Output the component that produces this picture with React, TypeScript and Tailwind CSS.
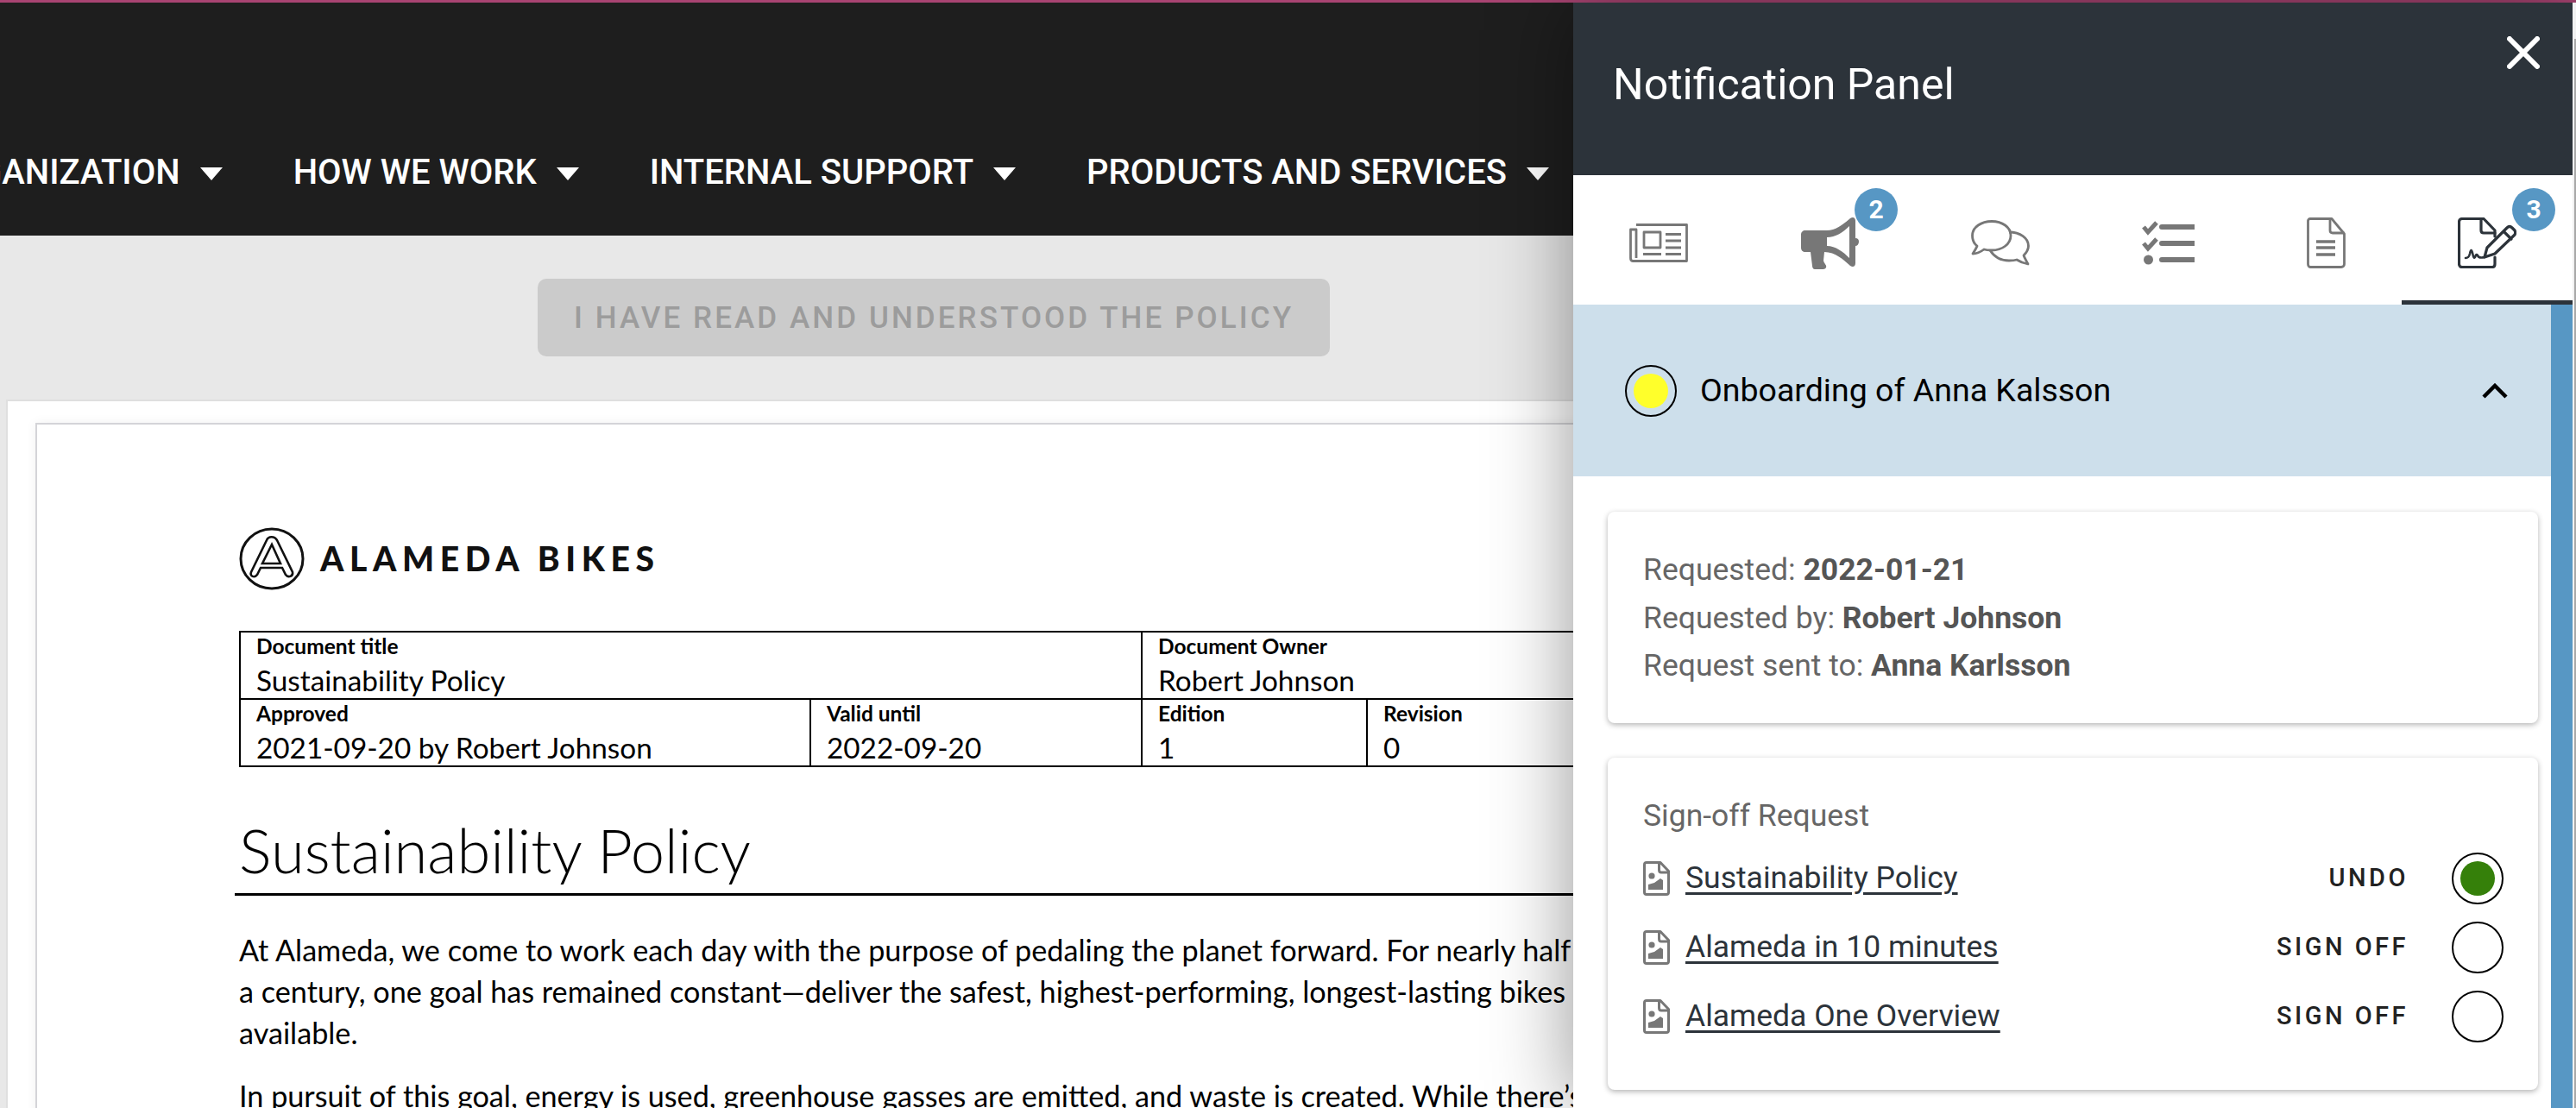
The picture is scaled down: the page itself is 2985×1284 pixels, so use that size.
import React from "react";

const NavItem = ({ label }: { label: string }) => (
  <div className="flex items-center shrink-0 whitespace-nowrap">
    <span className="text-[40px] font-medium text-white">{label}</span>
    <svg className="ml-[23px] mt-[3px]" width="26" height="15" viewBox="0 0 26 15">
      <path d="M0 0H26L13 15Z" fill="#ffffff" />
    </svg>
  </div>
);

const Badge = ({ n }: { n: number }) => (
  <div className="absolute top-[15px] flex h-[50px] w-[50px] items-center justify-center rounded-full bg-[#5797c4] text-[30px] font-bold leading-none text-white">
    {n}
  </div>
);

const Newspaper = () => (
  <svg width="68" height="45" viewBox="0 0 68 45" fill="none" stroke="#777" strokeWidth="2.8" strokeLinejoin="round">
    <path d="M8 1.5H66.5V43.5H4C2 43.5 1.5 42 1.5 40V7H8V40" />
    <rect x="17" y="10" width="19" height="18" />
    <path d="M42 12.5H60M42 20H60M42 28H60M16 35.5H37M42 35.5H60" strokeWidth="3" />
  </svg>
);

const Megaphone = () => (
  <svg width="67" height="60" viewBox="0 0 67 60">
    <path
      fill="#777"
      fillRule="evenodd"
      d="M5 15H30C40 15 49 8 57 1C60 -1 63 0 63 4V24C66 24 67 26 67 28C67 31 65 33 63 33V53C63 57 60 58 57 56C49 49 40 40 27 40L26 50C27 54 30 55 29 58C28 60 26 60 24 60H16C14 60 13 58 13 56L11 40H5C2 40 0 38 0 35V20C0 17 2 15 5 15ZM30 23V33C40 33 49 40 56 47V10C49 17 40 23 30 23Z"
    />
  </svg>
);

const Chat = () => (
  <svg width="68" height="53" viewBox="0 0 68 53" fill="none" stroke="#777" strokeWidth="2.8" strokeLinejoin="round">
    <path d="M24 1.5C36 1.5 46 8 46 18C46 28 36 35 24 35C21 35 18 35 15 34C11 37 6 39 2 39C4 36 6 33 7 30C3 27 1.5 23 1.5 18C1.5 8 12 1.5 24 1.5Z" />
    <path d="M44 14C57 14 66.5 21 66.5 30C66.5 34 64 38 61 41C62 44 64 47 66 51C61 50 56 48 53 46C50 47 46 47 44 47C35 47 27 43 22 35" />
  </svg>
);

const Checklist = () => (
  <svg width="61" height="52" viewBox="0 0 61 52" fill="none" stroke="#777">
    <path d="M2 7L7 13L17 2M2 26L7 32L17 21" strokeWidth="5" />
    <path d="M23 7H60M23 26H60M23 45H60" strokeWidth="6" strokeLinecap="round" />
    <circle cx="7.5" cy="45" r="5.5" fill="#777" stroke="none" />
  </svg>
);

const DocIcon = () => (
  <svg width="45" height="59" viewBox="0 0 45 59" fill="none" stroke="#777" strokeWidth="2.8" strokeLinejoin="round">
    <path d="M4 1.5H29L43.5 19V54C43.5 56 42 57.5 40 57.5H4C2.5 57.5 1.5 56 1.5 54V4C1.5 2.5 2.5 1.5 4 1.5Z" />
    <path d="M27 1.5V15C27 17 28 18 30 18H43.5" />
    <path d="M11 28H33M11 35H33M11 43H33" strokeWidth="3.5" />
  </svg>
);

const SignIcon = () => (
  <svg width="68" height="59" viewBox="0 0 68 59" fill="none" stroke="#2c333a" strokeWidth="3.2" strokeLinejoin="round" strokeLinecap="round">
    <path d="M43 22V15L30 1.5H5C3 1.5 1.5 3 1.5 5V54C1.5 56 3 57.5 5 57.5H40C42 57.5 43 56 43 54V46" />
    <path d="M27 1.5V15C27 17 28 18 30 18H43" />
    <path d="M9 47C12 47 13 46 14 42C15 37 16 37 17 41C18 46 19 48 20 46C21 43 22 42 23 44C24 47 27 47 31 46" strokeWidth="2.6" />
    <path d="M31 46L34 35L57 12C59 10 61 10 63 12L66 15C67 17 67 18 66 20L43 42ZM53 16L62 25" />
  </svg>
);

const FileImage = () => (
  <svg width="31" height="40" viewBox="0 0 31 40" className="shrink-0">
    <path d="M4 1.5H20L29.5 11.5V36C29.5 37.5 28.5 38.5 27 38.5H4C2.5 38.5 1.5 37.5 1.5 36V4C1.5 2.5 2.5 1.5 4 1.5Z" fill="none" stroke="#777" strokeWidth="3" strokeLinejoin="round" />
    <path d="M18.5 2V10C18.5 12 19.5 13 21 13H29" fill="none" stroke="#777" strokeWidth="3" />
    <circle cx="10" cy="17" r="3.6" fill="#777" />
    <path d="M6 33V27L13 25L20 20L23 22V33Z" fill="#777" />
  </svg>
);

const LogoMark = () => (
  <svg width="76" height="73" viewBox="0 0 76 73" fill="none" stroke="#111" className="shrink-0">
    <ellipse cx="38" cy="36.5" rx="36" ry="34.5" strokeWidth="3" />
    <path d="M32 15C34 10 41 10 44 15L62 52C63 57 57 59 54 55L50 47H25L21 55C18 59 12 57 14 52Z" strokeWidth="2.6" />
    <path d="M38 20L48 42H27Z" strokeWidth="2.6" />
  </svg>
);

const Tab = ({ w, children, badgeLeft, n, active }: { w: string; children: React.ReactNode; badgeLeft?: string; n?: number; active?: boolean }) => (
  <div className={`relative flex items-center justify-center pt-[7px] ${w}`}>
    {children}
    {n ? (
      <div className={`absolute ${badgeLeft}`}>
        <Badge n={n} />
      </div>
    ) : null}
    {active ? <div className="absolute bottom-0 left-0 h-[5px] w-full bg-[#2c333a]" /> : null}
  </div>
);

const Cell = ({ label, value, className }: { label: string; value: string; className: string }) => (
  <div className={`h-full shrink-0 pl-[18px] ${className}`}>
    <div className="h-[34px] text-[24.5px] font-bold leading-[32px] text-black">{label}</div>
    <div className="whitespace-nowrap text-[33.3px] leading-[42px] text-black">{value}</div>
  </div>
);

const Row = ({ name, action, done }: { name: string; action: string; done?: boolean }) => (
  <div className="flex h-[80px] items-center">
    <FileImage />
    <span className="ml-[18px] text-[35.5px] text-[#2c333a] underline underline-offset-[5px]">{name}</span>
    <span className="ml-auto text-[29px] font-medium tracking-[0.12em] text-[#222]">{action}</span>
    <div className="ml-[50px] mr-[40px] flex h-[60px] w-[60px] items-center justify-center rounded-full border-[2.5px] border-black bg-white">
      {done ? <div className="h-[40px] w-[40px] rounded-full bg-[#35800a]" /> : null}
    </div>
  </div>
);

export default function App() {
  return (
    <div className="relative h-[1284px] w-[2985px] overflow-hidden bg-[#e8e8e8] font-['Roboto',sans-serif]">
      <div className="h-[3px] bg-[#a94472]" />
      <nav className="flex h-[270px] w-[1823px] items-center justify-end gap-[82px] overflow-hidden bg-[#1e1e1e] pb-[30px] pr-[28px] pt-[154px]">
        <NavItem label="ORGANIZATION" />
        <NavItem label="HOW WE WORK" />
        <NavItem label="INTERNAL SUPPORT" />
        <NavItem label="PRODUCTS AND SERVICES" />
      </nav>

      <div className="ml-[623px] mt-[50px] flex h-[90px] w-[918px] items-center justify-center rounded-[10px] bg-[#cbcbcb] pt-[2px] text-[35px] font-medium tracking-[0.088em] text-[#9c9c9c]">
        I HAVE READ AND UNDERSTOOD THE POLICY
      </div>

      <div className="ml-[7px] mt-[50px] h-[900px] border-l-[2px] border-t-[2px] border-[#dfdfdf] bg-white pl-[32px] pt-[25px]">
        <div className="h-[900px] border-l-[2px] border-t-[2px] border-[#d4d4d8] bg-white pl-[234px] pt-[119px] font-['Lato',sans-serif] shadow-[0_0_12px_rgba(0,0,0,0.06)]">
          <div className="flex h-[73px] items-center">
            <LogoMark />
            <span className="ml-[18px] whitespace-nowrap text-[39px] font-black tracking-[0.17em] text-[#111]">ALAMEDA BIKES</span>
          </div>

          <div className="mt-[47px] w-[2000px] border-[2px] border-black">
            <div className="flex h-[78px] border-b-[2px] border-black">
              <Cell label="Document title" value="Sustainability Policy" className="w-[1045px] border-r-[2px] border-black" />
              <Cell label="Document Owner" value="Robert Johnson" className="w-[600px]" />
            </div>
            <div className="flex h-[76px]">
              <Cell label="Approved" value="2021-09-20 by Robert Johnson" className="w-[661px] border-r-[2px] border-black" />
              <Cell label="Valid until" value="2022-09-20" className="w-[384px] border-r-[2px] border-black" />
              <Cell label="Edition" value="1" className="w-[261px] border-r-[2px] border-black" />
              <Cell label="Revision" value="0" className="w-[400px]" />
            </div>
          </div>

          <div className="-ml-[5px] mt-[36px] h-[113px] w-[2000px] border-b-[3px] border-black pl-[5px] pt-[15px] text-[70.5px] font-light leading-[90px] text-black">
            Sustainability Policy
          </div>

          <p className="mt-[39px] whitespace-nowrap text-[34.2px] leading-[48px] text-black">
            At Alameda, we come to work each day with the purpose of pedaling the planet forward. For nearly half
            <br />
            a century, one goal has remained constant—deliver the safest, highest-performing, longest-lasting bikes
            <br />
            available.
          </p>
          <p className="mt-[25px] whitespace-nowrap text-[34.2px] leading-[48px] text-black">
            In pursuit of this goal, energy is used, greenhouse gasses are emitted, and waste is created. While there’s
          </p>
        </div>
      </div>

      <aside className="absolute bottom-0 left-[1823px] top-[3px] flex w-[1158px] flex-col bg-white shadow-[0_0_90px_rgba(0,0,0,0.42)]">
        <header className="relative flex h-[200px] items-center bg-[#2c333a] pb-[10px] pl-[46px] text-[50px] text-white">
          Notification Panel
          <svg className="absolute left-[1082px] top-[39px]" width="38" height="38" viewBox="0 0 38 38" stroke="#fff" strokeWidth="6" strokeLinecap="round">
            <path d="M3 3L35 35M35 3L3 35" />
          </svg>
        </header>

        <div className="flex h-[150px]">
          <Tab w="w-[198px]"><Newspaper /></Tab>
          <Tab w="w-[198px]" n={2} badgeLeft="left-[128px] top-0"><Megaphone /></Tab>
          <Tab w="w-[198px]"><Chat /></Tab>
          <Tab w="w-[191px]"><Checklist /></Tab>
          <Tab w="w-[175px]"><DocIcon /></Tab>
          <Tab w="w-[198px]" n={3} badgeLeft="left-[128px] top-0" active><SignIcon /></Tab>
        </div>

        <div className="flex min-h-0 flex-1">
          <div className="w-[1133px]">
            <div className="flex h-[199px] items-center bg-[#cddfeb] pl-[60px] pr-[50px]">
              <div className="flex h-[60px] w-[60px] items-center justify-center rounded-full border-[2.5px] border-black">
                <div className="h-[40px] w-[40px] rounded-full bg-[#ffff2b]" />
              </div>
              <span className="ml-[27px] text-[37.5px] text-black">Onboarding of Anna Kalsson</span>
              <svg className="ml-auto" width="30" height="18" viewBox="0 0 30 18" fill="none" stroke="#000" strokeWidth="4.5">
                <path d="M2 16L15 3L28 16" />
              </svg>
            </div>

            <div className="ml-[40px] mr-[15px] mt-[41px] flex h-[245px] flex-col justify-center rounded-[8px] bg-white pl-[41px] pt-[2px] text-[35.5px] leading-[55.5px] text-[#666] shadow-[0_2px_6px_rgba(0,0,0,0.3)]">
              <div>Requested: <b className="font-bold text-[#555]">2022-01-21</b></div>
              <div>Requested by: <b className="font-bold text-[#555]">Robert Johnson</b></div>
              <div>Request sent to: <b className="font-bold text-[#555]">Anna Karlsson</b></div>
            </div>

            <div className="ml-[40px] mr-[15px] mt-[40px] h-[385px] rounded-[8px] bg-white pl-[41px] pt-[40px] shadow-[0_2px_6px_rgba(0,0,0,0.3)]">
              <div className="mb-[5px] text-[35.5px] leading-[55px] text-[#666]">Sign-off Request</div>
              <Row name="Sustainability Policy" action="UNDO" done />
              <Row name="Alameda in 10 minutes" action="SIGN OFF" />
              <Row name="Alameda One Overview" action="SIGN OFF" />
            </div>
          </div>
          <div className="w-[25px] bg-[#5797c4]" />
        </div>
      </aside>

      <div className="absolute bottom-0 right-0 top-[3px] w-[4px] bg-[#f1f1f1]">
        <div className="ml-[2px] mt-[42px] h-[1239px] w-[2px] bg-[#a8a8a8]" />
      </div>
    </div>
  );
}
